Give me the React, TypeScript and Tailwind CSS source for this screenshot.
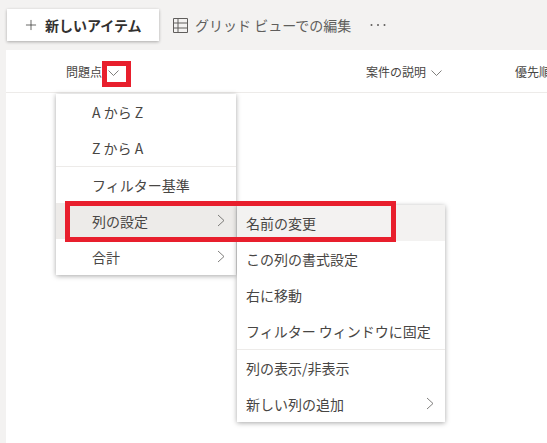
import { Plus } from "lucide-react";

const font = "font-['Noto_Sans_CJK_JP','Liberation_Sans',sans-serif]";

function Chevron() {
    return (
        <svg width="11" height="6" viewBox="0 0 11 6" fill="none" stroke="#605e5c" strokeWidth="0.8" className="shrink-0">
            <path d="M.5.5l5 5 5-5" />
        </svg>
    );
}

function ChevronSide() {
    return (
        <svg width="8" height="13" viewBox="0 0 8 13" fill="none" stroke="#605e5c" strokeWidth="0.8" className="shrink-0">
            <path d="M1 1l6 5.5-6 5.5" />
        </svg>
    );
}

function MenuItem({ label, arrow, active, indent }: { label: string; arrow?: boolean; active?: string; indent?: boolean }) {
    return (
        <div className={`flex items-center justify-between h-9 pr-[11px] pb-[1px] text-sm text-[#484644] ${indent ? "pl-9" : "pl-[9px]"} ${active ?? ""}`}>
            <span className="whitespace-nowrap">{label}</span>
            {arrow && <ChevronSide />}
        </div>
    );
}

export default function App() {
    return (
        <div className={`relative w-[547px] h-[443px] overflow-hidden bg-[#f3f2f1] ${font}`}>
            {/* Command bar */}
            <div className="flex items-center h-[50px] pl-[7px]">
                <div className="flex items-center w-[152px] h-[32px] pl-[16px] bg-white shadow-[0_1px_3px_rgba(0,0,0,0.3)]">
                    <Plus size={16} strokeWidth={1.1} className="shrink-0 text-[#323130]" />
                    <span className="ml-[6px] text-sm font-bold text-[#323130] whitespace-nowrap">新しいアイテム</span>
                </div>
                <svg width="15" height="15" viewBox="0 0 15 15" fill="none" stroke="#605e5c" strokeWidth="1" className="ml-[14px] shrink-0">
                    <path d="M.5.5h14v14H.5zM.5 5h14M.5 10h14M5 .5v14" />
                </svg>
                <span className="ml-[7px] text-sm text-[#605e5c] whitespace-nowrap">グリッド ビューでの編集</span>
                <svg width="16" height="4" viewBox="0 0 16 4" fill="#605e5c" className="ml-[19px] shrink-0">
                    <circle cx="1.5" cy="2" r="1" />
                    <circle cx="8" cy="2" r="1" />
                    <circle cx="14.5" cy="2" r="1" />
                </svg>
            </div>

            {/* List area */}
            <div className="ml-[6px] h-[393px] bg-white">
                <div className="flex items-center h-[43px] pt-[2px] border-b border-[#edebe9] text-xs text-[#484644]">
                    <span className="ml-[60px] whitespace-nowrap">問題点</span>
                    <span className="ml-[6px] mt-[1px]"><Chevron /></span>
                    <span className="ml-[247px] whitespace-nowrap">案件の説明</span>
                    <span className="ml-[5px] mt-[1px]"><Chevron /></span>
                    <span className="ml-[73px] whitespace-nowrap">優先順位</span>
                </div>
            </div>

            {/* Column menu */}
            <div className="absolute left-[56px] top-[94px] w-[180px] bg-white shadow-[0_1px_5px_rgba(0,0,0,0.35)]">
                <MenuItem label="A から Z" indent />
                <MenuItem label="Z から A" indent />
                <div className="border-t border-[#edebe9]">
                    <MenuItem label="フィルター基準" indent />
                </div>
                <MenuItem label="列の設定" arrow active="bg-[#edebe9]" indent />
                <MenuItem label="合計" arrow indent />
            </div>

            {/* Submenu */}
            <div className="absolute left-[237px] top-[205px] w-[208px] bg-white shadow-[0_1px_5px_rgba(0,0,0,0.35)]">
                <MenuItem label="名前の変更" active="bg-[#f3f2f1]" />
                <MenuItem label="この列の書式設定" />
                <MenuItem label="右に移動" />
                <MenuItem label="フィルター ウィンドウに固定" />
                <div className="border-t border-[#edebe9]">
                    <MenuItem label="列の表示/非表示" />
                </div>
                <MenuItem label="新しい列の追加" arrow />
            </div>

            {/* Red annotation boxes */}
            <div className="absolute left-[102px] top-[61px] w-[29px] h-[26px] border-[5px] border-[#e81f2d]" />
            <div className="absolute left-[65px] top-[201px] w-[331px] h-[41px] border-[5px] border-[#e81f2d]" />
        </div>
    );
}
